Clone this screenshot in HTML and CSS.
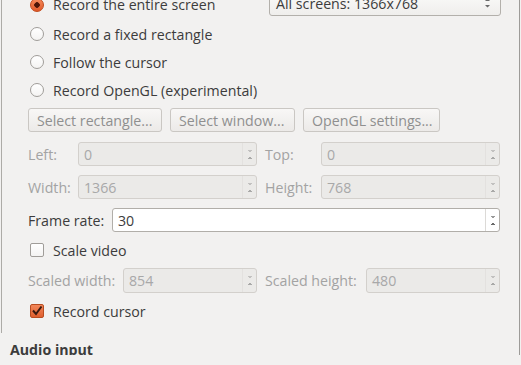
FILE: index.html
```html
<!DOCTYPE html>
<html lang="en">
<head>
    <meta charset="UTF-8">
    <title>Input</title>
    <link rel="stylesheet" href="styles.css">
</head>
<body>
    <div class="window">
        <div class="video-group">
            <div class="row first">
                <label class="choice"><span class="radio on"></span>Record the entire screen</label>
                <div class="combo">
                    <span>All screens: 1366x768</span>
                    <svg class="arrows" width="9" height="12" viewBox="0 0 9 12"><path d="M4.5 1.5 L7 4 H2 Z M4.5 10.5 L7 8 H2 Z" fill="#6a6a6a"/></svg>
                </div>
            </div>
            <label class="choice row"><span class="radio"></span>Record a fixed rectangle</label>
            <label class="choice row"><span class="radio"></span>Follow the cursor</label>
            <label class="choice row"><span class="radio"></span>Record OpenGL (experimental)</label>

            <div class="buttons">
                <button class="btn w1" disabled>Select rectangle...</button>
                <button class="btn w2" disabled>Select window...</button>
                <button class="btn w3" disabled>OpenGL settings...</button>
            </div>

            <div class="rect-grid">
                <span class="lbl off">Left:</span>
                <div class="spin off"><span>0</span><i class="spin-btn"></i></div>
                <span class="lbl off">Top:</span>
                <div class="spin off"><span>0</span><i class="spin-btn"></i></div>
                <span class="lbl off">Width:</span>
                <div class="spin off"><span>1366</span><i class="spin-btn"></i></div>
                <span class="lbl off">Height:</span>
                <div class="spin off"><span>768</span><i class="spin-btn"></i></div>
            </div>

            <div class="rate-row">
                <span class="lbl">Frame rate:</span>
                <div class="spin"><span>30</span><i class="spin-btn"></i></div>
            </div>

            <label class="choice check-row"><span class="check"></span>Scale video</label>

            <div class="scale-grid">
                <span class="lbl off">Scaled width:</span>
                <div class="spin off"><span>854</span><i class="spin-btn"></i></div>
                <span class="lbl off">Scaled height:</span>
                <div class="spin off"><span>480</span><i class="spin-btn"></i></div>
            </div>

            <label class="choice check-row"><span class="check on"><svg width="14" height="14" viewBox="0 0 14 14"><path d="M3 6.5 L6 10 L11.5 2.5" fill="none" stroke="#3a1a10" stroke-width="2"/></svg></span>Record cursor</label>
        </div>

        <h3 class="section">Audio input</h3>
    </div>
</body>
</html>
```

FILE: styles.css
```css
body {
    margin: 0;
    background: #f2f1f0;
    font-family: "Open Sans", "Noto Sans", sans-serif;
    font-size: 14.2px;
    color: #3c3c3c;
    overflow: hidden;
}
.window {
    width: 520px;
    height: 365px;
    box-sizing: border-box;
    border-right: 1px solid #9d9b98;
}
.video-group {
    margin: -10px 0 0 1px;
    height: 343px;
    box-sizing: border-box;
    border-left: 1px solid #adaba7;
    padding: 0 18px 0 26px;
}
.row {
    height: 28px;
}
.row.first {
    height: 26px;
    display: grid;
    grid-template-columns: 1fr 232px;
    align-items: center;
    margin-bottom: 4px;
}
.choice {
    display: flex;
    align-items: center;
    gap: 9px;
    padding-left: 2px;
    white-space: nowrap;
}
.first .choice {
    padding-top: 3px;
}
.radio {
    width: 14px;
    height: 14px;
    box-sizing: border-box;
    border-radius: 50%;
    border: 1px solid #a09d99;
    background: linear-gradient(#ffffff, #f4f3f2);
    flex: none;
}
.radio.on {
    border-color: #c24a1c;
    background: radial-gradient(circle, #4d1507 0 2.5px, transparent 3px), linear-gradient(#f58a5b, #e0592a);
}
.check {
    width: 14px;
    height: 14px;
    box-sizing: border-box;
    border-radius: 2px;
    border: 1px solid #a09d99;
    background: linear-gradient(#ffffff, #f4f3f2);
    flex: none;
    display: grid;
    place-items: center;
}
.check.on {
    border-color: #b84c20;
    background: linear-gradient(#f2875a, #df5f2f);
}
.check svg {
    margin: -1px;
}
.combo {
    height: 25px;
    box-sizing: border-box;
    border: 1px solid #b3b0ab;
    border-radius: 3px;
    background: linear-gradient(#fbfbfa, #efeeec);
    display: flex;
    align-items: center;
    justify-content: space-between;
    padding: 0 8px 0 6px;
}
.buttons {
    display: flex;
    gap: 8px;
    margin-top: 4px;
}
.btn {
    height: 24px;
    box-sizing: border-box;
    border: 1px solid #cac7c3;
    border-radius: 3px;
    background: linear-gradient(#f8f7f6, #eceae8);
    font: inherit;
    color: #8f8f8f;
    padding: 0 0 0 8px;
    text-align: left;
    white-space: nowrap;
}
.w1 { width: 134px; }
.w2 { width: 125px; }
.w3 { width: 137px; }
.rect-grid {
    display: grid;
    grid-template-columns: 42px 179px 48px 179px;
    grid-auto-rows: 24px;
    column-gap: 8px;
    row-gap: 9px;
    margin-top: 10px;
    align-items: center;
}
.rate-row {
    display: grid;
    grid-template-columns: 76px 388px;
    column-gap: 8px;
    height: 24px;
    margin-top: 9px;
    align-items: center;
}
.scale-grid {
    display: grid;
    grid-template-columns: 87px 134px 93px 134px;
    column-gap: 8px;
    height: 25px;
    margin-top: 6px;
    align-items: center;
}
.lbl {
    white-space: nowrap;
}
.lbl.off {
    color: #a3a3a3;
}
.spin {
    height: 100%;
    box-sizing: border-box;
    border: 1px solid #b1aea9;
    border-radius: 3px;
    background: #ffffff;
    display: flex;
    align-items: center;
    justify-content: space-between;
    padding-left: 5px;
}
.spin.off {
    border-color: #d3d0cc;
    background: #ebeae8;
    color: #a8a8a8;
}
.spin-btn {
    width: 14px;
    height: 100%;
    box-sizing: border-box;
    border-left: 1px solid #dcdad7;
    background:
        linear-gradient(to top right, transparent 50%, #9a9a9a 50%) 4px 7px / 3px 2px no-repeat,
        linear-gradient(to top left, transparent 50%, #9a9a9a 50%) 7px 7px / 3px 2px no-repeat,
        linear-gradient(to bottom right, transparent 50%, #6a6a6a 50%) 4px 14px / 3px 2px no-repeat,
        linear-gradient(to bottom left, transparent 50%, #6a6a6a 50%) 7px 14px / 3px 2px no-repeat;
}
.spin.off .spin-btn {
    opacity: 0.5;
}
.check-row {
    height: 24px;
    margin-top: 6px;
}
.section {
    margin: 7px 0 0 10px;
    font-size: 14.2px;
    font-weight: 700;
    line-height: 20px;
}
```
